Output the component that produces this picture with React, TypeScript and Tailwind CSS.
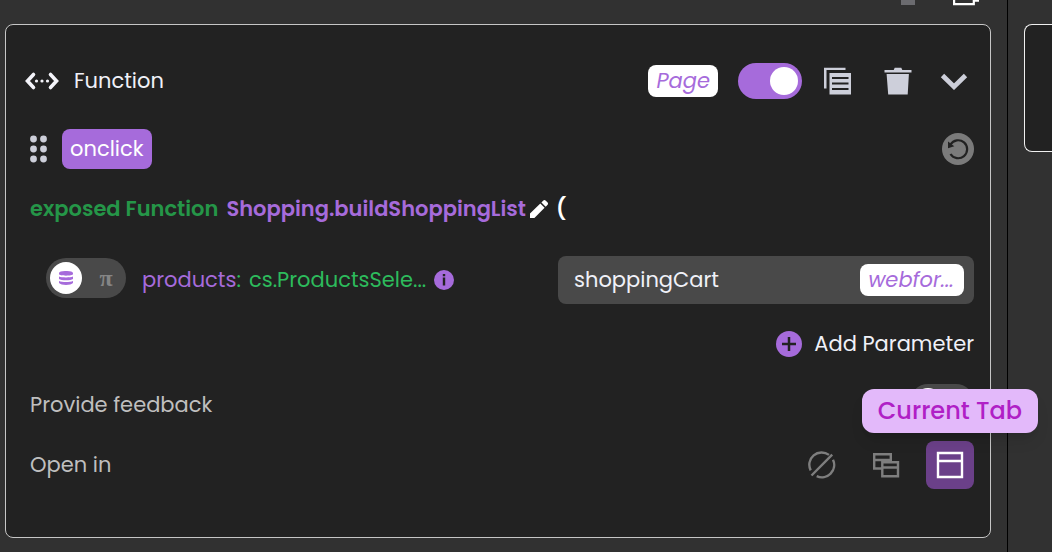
import type { ReactNode } from "react";

function ArrowsIcon() {
  return (
    <svg width="36" height="20" viewBox="0 0 36 20" fill="none" aria-hidden="true">
      <path d="M9.500 3.500 3.500 10l6 6.500M26.500 3.500l6 6.500-6 6.500" stroke="#f4f4fa" strokeWidth="3.600" strokeLinecap="round" />
      <g fill="#f4f4fa"><circle cx="12.500" cy="10" r="1.600" /><circle cx="18" cy="10" r="1.600" /><circle cx="23.500" cy="10" r="1.600" /></g>
    </svg>
  );
}

function GripIcon() {
  return (
    <svg width="18" height="28" viewBox="0 0 18 28" fill="#cdcfda" aria-hidden="true">
      <circle cx="3.500" cy="4" r="3.400" /><circle cx="13.500" cy="4" r="3.400" />
      <circle cx="3.500" cy="14" r="3.400" /><circle cx="13.500" cy="14" r="3.400" />
      <circle cx="3.500" cy="24" r="3.400" /><circle cx="13.500" cy="24" r="3.400" />
    </svg>
  );
}

function CopyIcon() {
  return (
    <svg width="28" height="28" viewBox="0 0 28 28" aria-hidden="true">
      <path d="M0 .700h21.500V3H2.500v18.500H0zM5.500 6h21.500v21.500H5.500z" fill="#cdcfda" />
      <path d="M8 11h16.500M8 16.500h16.500M8 22h16.500" stroke="#222" strokeWidth="2.200" />
    </svg>
  );
}

function TrashIcon() {
  return (
    <svg width="28" height="28" viewBox="0 0 28 28" fill="#cdcfda" aria-hidden="true">
      <path d="M.500 3h9.200l1-2.200h6.600l1 2.200h9.200v2.600H.500zM2.600 7h22.300l-1.200 20.500H4.200z" />
    </svg>
  );
}

function ChevronIcon() {
  return (
    <svg width="28" height="18" viewBox="0 0 28 18" fill="none" aria-hidden="true">
      <path d="m2.500 3.500 11.500 11.200L25.500 3.500" stroke="#cdcfda" strokeWidth="4.800" />
    </svg>
  );
}

function ResetIcon() {
  return (
    <svg width="32" height="32" viewBox="0 0 32 32" aria-hidden="true">
      <circle cx="16" cy="16" r="16" fill="#7b7b7b" />
      <path d="M8.500 11.500A9 9 0 1 1 8.500 21" fill="none" stroke="#222" strokeWidth="2.200" />
      <path d="M6 8.500v6.700l6.300-2z" fill="#222" />
    </svg>
  );
}

function PencilIcon() {
  return (
    <svg width="18" height="18" viewBox="0 0 18 18" fill="#fff" aria-hidden="true">
      <path d="M0 13.600V18h4.400L14.600 7.700l-4.300-4.300zM11.400 2.400l4.300 4.300 1.700-1.700a1.900 1.900 0 0 0 0-2.700L15.800.7a1.900 1.900 0 0 0-2.700 0z" />
    </svg>
  );
}

function DatabaseIcon() {
  return (
    <svg width="14" height="14" viewBox="0 0 14 14" fill="#a66bdb" aria-hidden="true">
      <path d="M0 2c0-2.700 14-2.700 14 0v1c0 2.200-14 2.200-14 0zM0 5.500c3 1.200 11 1.200 14 0V8c-2 1.700-12 1.700-14 0zM0 10c3 1.300 11 1.300 14 0v2c-2 2.500-12 2.500-14 0z" />
    </svg>
  );
}

function InfoIcon() {
  return (
    <svg width="20" height="20" viewBox="0 0 20 20" aria-hidden="true">
      <circle cx="10" cy="10" r="10" fill="#a66bdb" />
      <path d="M8.800 4h2.400v2.200H8.800zM8.800 7.400h2.400v8.200H8.800z" fill="#222" />
    </svg>
  );
}

function PlusIcon() {
  return (
    <svg width="26" height="26" viewBox="0 0 26 26" aria-hidden="true">
      <circle cx="13" cy="13" r="13" fill="#a66bdb" />
      <path d="M13 6v14M6 13h14" stroke="#222" strokeWidth="2.500" />
    </svg>
  );
}

function NoneIcon() {
  return (
    <svg width="28" height="28" viewBox="0 0 28 28" fill="none" stroke="#7e7e7e" strokeWidth="2.400" aria-hidden="true">
      <path d="M2.700 19.400A12.300 12.300 0 0 1 21 3.900M25 8.700A12.300 12.300 0 0 1 8.700 25.100M3.500 24.500 24.200 3.600" />
    </svg>
  );
}

function WindowsIcon() {
  return (
    <svg width="28" height="28" viewBox="0 0 28 28" fill="none" stroke="#7e7e7e" strokeWidth="2.400" aria-hidden="true">
      <path d="M10 17.500H2.200V3.200h16.600v8M2.200 9h16.600M10.300 11.300H26v14H10.300zM10.300 16.500H26" />
    </svg>
  );
}

function TabIcon() {
  return (
    <svg width="28" height="28" viewBox="0 0 28 28" fill="none" stroke="#fff" strokeWidth="2.400" aria-hidden="true">
      <path d="M2 2h24v24H2zM2 10h24" />
    </svg>
  );
}

function IconButton({ label, children }: { label: string; children: ReactNode }) {
  return (
    <button type="button" aria-label={label} className="flex size-7 shrink-0 items-center justify-center">
      {children}
    </button>
  );
}

export default function App() {
  return (
    <div className="flex min-h-screen overflow-hidden bg-[#313131] font-['Poppins','Inter',sans-serif] text-[21px] leading-8 text-[#f0f1f8]">
      <main className="flex min-w-0 flex-1 flex-col pb-3.5 pl-[5px] pr-4">
        <div className="flex h-6 items-start justify-end gap-[38px] pr-3">
          <span className="h-[5px] w-3.5 bg-[#6b6b6f]" />
          <svg width="26" height="6" viewBox="0 0 26 6" fill="none" stroke="#fff" strokeWidth="2.200" aria-hidden="true">
            <path d="M1.100 0v4.200h19.700V0M21 .700h5" />
          </svg>
        </div>

        <section className="flex flex-1 flex-col rounded-lg border border-[#c6c6c6] bg-[#222] pb-8 pl-6 pr-4">
          <header className="-ml-1.5 mt-9 flex h-10 items-center">
            <ArrowsIcon />
            <h2 className="ml-3.5">Function</h2>
            <div className="ml-auto flex items-center pr-1.5">
              <span className="rounded-lg bg-white px-2 italic text-[#a66bdb]">Page</span>
              <button type="button" role="switch" aria-checked="true" aria-label="Enabled" className="ml-5 mr-[22px] flex h-9 w-16 items-center justify-end rounded-full bg-[#a66bdb] pr-1">
                <span className="size-7 rounded-full bg-white" />
              </button>
              <div className="flex gap-8">
                <IconButton label="Duplicate"><CopyIcon /></IconButton>
                <IconButton label="Delete"><TrashIcon /></IconButton>
              </div>
              <span className="ml-7"><IconButton label="Collapse"><ChevronIcon /></IconButton></span>
            </div>
          </header>

          <div className="mt-7 flex h-10 items-center justify-between">
            <div className="flex items-center gap-3.5">
              <GripIcon />
              <button type="button" className="h-10 rounded-lg bg-[#a66bdb] px-2 text-white">onclick</button>
            </div>
            <button type="button" aria-label="Reset"><ResetIcon /></button>
          </div>

          <div className="mt-6 flex items-center gap-2 font-semibold">
            <span className="text-[#259648]">exposed Function</span>
            <span className="text-[#a66bdb]">Shopping.buildShoppingList</span>
            <button type="button" aria-label="Edit function" className="-ml-1"><PencilIcon /></button>
            <span className="text-white">(</span>
          </div>

          <div className="mt-[31px] flex h-12 items-center">
            <button type="button" role="switch" aria-checked="false" aria-label="Use formula" className="ml-4 mt-0.5 flex h-10 w-20 shrink-0 items-center self-start rounded-full bg-[#494949] p-1">
              <span className="flex size-8 items-center justify-center rounded-full bg-white"><DatabaseIcon /></span>
              <span className="flex-1 pl-2 text-center font-['Liberation_Serif',serif] text-2xl font-bold text-[#858585]">π</span>
            </button>
            <label htmlFor="products" className="ml-4 flex items-center gap-2 whitespace-nowrap">
              <span className="text-[#a66bdb]">products<span className="text-[#2dbb5c]">:</span></span>
              <span className="text-[#2dbb5c]">cs.ProductsSele...</span>
            </label>
            <button type="button" aria-label="Parameter info" className="ml-2"><InfoIcon /></button>
            <div className="ml-auto flex h-12 w-[416px] items-center rounded-lg bg-[#494949] pl-4 pr-2.5">
              <input id="products" defaultValue="shoppingCart" className="min-w-0 flex-1 bg-transparent outline-none" />
              <span className="rounded-lg bg-white pl-2 pr-2.5 italic text-[#a66bdb]">webfor...</span>
            </div>
          </div>

          <button type="button" className="mt-6 flex items-center gap-3 self-end">
            <PlusIcon />
            Add Parameter
          </button>

          <div className="mt-6 flex h-[42px] items-center justify-between text-[#bfbfbf]">
            <span id="feedback">Provide feedback</span>
            <button type="button" role="switch" aria-checked="false" aria-labelledby="feedback" className="flex h-9 w-16 items-center self-start rounded-full bg-[#494949] px-1">
              <span className="size-7 rounded-full bg-white" />
            </button>
          </div>

          <div className="mt-[15px] flex h-12 items-center justify-between text-[#bfbfbf]">
            <span>Open in</span>
            <div className="flex items-center gap-9">
              <IconButton label="None"><NoneIcon /></IconButton>
              <IconButton label="New window"><WindowsIcon /></IconButton>
              <div className="relative -ml-2.5 size-12">
                <button type="button" aria-label="Current tab" aria-describedby="tab-tip" className="flex size-12 items-center justify-center rounded-lg bg-[#6b4089]"><TabIcon /></button>
                <div id="tab-tip" role="tooltip" className="absolute -right-16 bottom-14 flex h-11 items-center whitespace-nowrap rounded-xl bg-[#e3b9fa] px-4 text-2xl font-medium text-[#b01fc6] shadow-lg">Current Tab</div>
              </div>
            </div>
          </div>
        </section>
      </main>
      <aside className="w-[45px] shrink-0 border-l border-black pl-4 pt-6">
        <div className="h-32 rounded-l-lg border border-r-0 border-[#f0f0f0] bg-[#222]" />
      </aside>
    </div>
  );
}
